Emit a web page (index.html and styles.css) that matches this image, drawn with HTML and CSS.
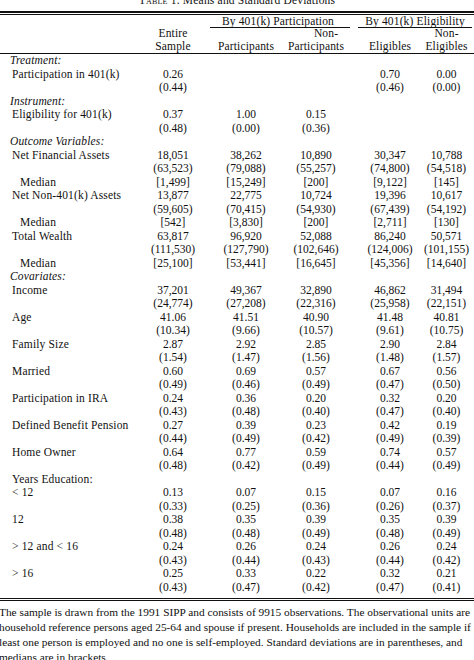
FILE: index.html
```html
<!DOCTYPE html>
<html>
<head>
<meta charset="utf-8">
<title>Table 1</title>
<link rel="stylesheet" href="styles.css">
</head>
<body>
<div class="title"><span class="sc">Table</span> 1. Means and Standard Deviations</div>
<div class="rule-double"></div>
<div class="head">
  <div class="grp grp-p"><span class="grp-text">By 401(k) Participation</span></div>
  <div class="grp grp-e"><span class="grp-text">By 401(k) Eligibility</span></div>
  <div class="hc c1 r2">Entire</div>
  <div class="hc c3 r2 non-p">Non-</div>
  <div class="hc c5 r2">Non-</div>
  <div class="hc c1 r3">Sample</div>
  <div class="hc c2 r3">Participants</div>
  <div class="hc c3 r3">Participants</div>
  <div class="hc c4 r3">Eligibles</div>
  <div class="hc c5 r3">Eligibles</div>
</div>
<div class="body">
  <div class="cat">Treatment:</div>
  <div class="lab">Participation in 401(k)</div><div class="v">0.26</div><div class="v c2"></div><div class="v c3"></div><div class="v c4">0.70</div><div class="v c5">0.00</div>
  <div class="lab"></div><div class="v">(0.44)</div><div class="v c2"></div><div class="v c3"></div><div class="v c4">(0.46)</div><div class="v c5">(0.00)</div>
  <div class="cat">Instrument:</div>
  <div class="lab">Eligibility for 401(k)</div><div class="v">0.37</div><div class="v c2">1.00</div><div class="v c3">0.15</div><div class="v c4"></div><div class="v c5"></div>
  <div class="lab"></div><div class="v">(0.48)</div><div class="v c2">(0.00)</div><div class="v c3">(0.36)</div><div class="v c4"></div><div class="v c5"></div>
  <div class="cat">Outcome Variables:</div>
  <div class="lab">Net Financial Assets</div><div class="v">18,051</div><div class="v c2">38,262</div><div class="v c3">10,890</div><div class="v c4">30,347</div><div class="v c5">10,788</div>
  <div class="lab"></div><div class="v">(63,523)</div><div class="v c2">(79,088)</div><div class="v c3">(55,257)</div><div class="v c4">(74,800)</div><div class="v c5">(54,518)</div>
  <div class="lab sub">Median</div><div class="v">[1,499]</div><div class="v c2">[15,249]</div><div class="v c3">[200]</div><div class="v c4">[9,122]</div><div class="v c5">[145]</div>
  <div class="lab">Net Non-401(k) Assets</div><div class="v">13,877</div><div class="v c2">22,775</div><div class="v c3">10,724</div><div class="v c4">19,396</div><div class="v c5">10,617</div>
  <div class="lab"></div><div class="v">(59,605)</div><div class="v c2">(70,415)</div><div class="v c3">(54,930)</div><div class="v c4">(67,439)</div><div class="v c5">(54,192)</div>
  <div class="lab sub">Median</div><div class="v">[542]</div><div class="v c2">[3,830]</div><div class="v c3">[200]</div><div class="v c4">[2,711]</div><div class="v c5">[130]</div>
  <div class="lab">Total Wealth</div><div class="v">63,817</div><div class="v c2">96,920</div><div class="v c3">52,088</div><div class="v c4">86,240</div><div class="v c5">50,571</div>
  <div class="lab"></div><div class="v">(111,530)</div><div class="v c2">(127,790)</div><div class="v c3">(102,646)</div><div class="v c4">(124,006)</div><div class="v c5">(101,155)</div>
  <div class="lab sub">Median</div><div class="v">[25,100]</div><div class="v c2">[53,441]</div><div class="v c3">[16,645]</div><div class="v c4">[45,356]</div><div class="v c5">[14,640]</div>
  <div class="cat">Covariates:</div>
  <div class="lab">Income</div><div class="v">37,201</div><div class="v c2">49,367</div><div class="v c3">32,890</div><div class="v c4">46,862</div><div class="v c5">31,494</div>
  <div class="lab"></div><div class="v">(24,774)</div><div class="v c2">(27,208)</div><div class="v c3">(22,316)</div><div class="v c4">(25,958)</div><div class="v c5">(22,151)</div>
  <div class="lab">Age</div><div class="v">41.06</div><div class="v c2">41.51</div><div class="v c3">40.90</div><div class="v c4">41.48</div><div class="v c5">40.81</div>
  <div class="lab"></div><div class="v">(10.34)</div><div class="v c2">(9.66)</div><div class="v c3">(10.57)</div><div class="v c4">(9.61)</div><div class="v c5">(10.75)</div>
  <div class="lab">Family Size</div><div class="v">2.87</div><div class="v c2">2.92</div><div class="v c3">2.85</div><div class="v c4">2.90</div><div class="v c5">2.84</div>
  <div class="lab"></div><div class="v">(1.54)</div><div class="v c2">(1.47)</div><div class="v c3">(1.56)</div><div class="v c4">(1.48)</div><div class="v c5">(1.57)</div>
  <div class="lab">Married</div><div class="v">0.60</div><div class="v c2">0.69</div><div class="v c3">0.57</div><div class="v c4">0.67</div><div class="v c5">0.56</div>
  <div class="lab"></div><div class="v">(0.49)</div><div class="v c2">(0.46)</div><div class="v c3">(0.49)</div><div class="v c4">(0.47)</div><div class="v c5">(0.50)</div>
  <div class="lab">Participation in IRA</div><div class="v">0.24</div><div class="v c2">0.36</div><div class="v c3">0.20</div><div class="v c4">0.32</div><div class="v c5">0.20</div>
  <div class="lab"></div><div class="v">(0.43)</div><div class="v c2">(0.48)</div><div class="v c3">(0.40)</div><div class="v c4">(0.47)</div><div class="v c5">(0.40)</div>
  <div class="lab">Defined Benefit Pension</div><div class="v">0.27</div><div class="v c2">0.39</div><div class="v c3">0.23</div><div class="v c4">0.42</div><div class="v c5">0.19</div>
  <div class="lab"></div><div class="v">(0.44)</div><div class="v c2">(0.49)</div><div class="v c3">(0.42)</div><div class="v c4">(0.49)</div><div class="v c5">(0.39)</div>
  <div class="lab">Home Owner</div><div class="v">0.64</div><div class="v c2">0.77</div><div class="v c3">0.59</div><div class="v c4">0.74</div><div class="v c5">0.57</div>
  <div class="lab"></div><div class="v">(0.48)</div><div class="v c2">(0.42)</div><div class="v c3">(0.49)</div><div class="v c4">(0.44)</div><div class="v c5">(0.49)</div>
  <div class="cat plain">Years Education:</div>
  <div class="lab">&lt; 12</div><div class="v">0.13</div><div class="v c2">0.07</div><div class="v c3">0.15</div><div class="v c4">0.07</div><div class="v c5">0.16</div>
  <div class="lab"></div><div class="v">(0.33)</div><div class="v c2">(0.25)</div><div class="v c3">(0.36)</div><div class="v c4">(0.26)</div><div class="v c5">(0.37)</div>
  <div class="lab">12</div><div class="v">0.38</div><div class="v c2">0.35</div><div class="v c3">0.39</div><div class="v c4">0.35</div><div class="v c5">0.39</div>
  <div class="lab"></div><div class="v">(0.48)</div><div class="v c2">(0.48)</div><div class="v c3">(0.49)</div><div class="v c4">(0.48)</div><div class="v c5">(0.49)</div>
  <div class="lab">&gt; 12 and &lt; 16</div><div class="v">0.24</div><div class="v c2">0.26</div><div class="v c3">0.24</div><div class="v c4">0.26</div><div class="v c5">0.24</div>
  <div class="lab"></div><div class="v">(0.43)</div><div class="v c2">(0.44)</div><div class="v c3">(0.43)</div><div class="v c4">(0.44)</div><div class="v c5">(0.42)</div>
  <div class="lab">&gt; 16</div><div class="v">0.25</div><div class="v c2">0.33</div><div class="v c3">0.22</div><div class="v c4">0.32</div><div class="v c5">0.21</div>
  <div class="lab"></div><div class="v">(0.43)</div><div class="v c2">(0.47)</div><div class="v c3">(0.42)</div><div class="v c4">(0.47)</div><div class="v c5">(0.41)</div>
</div>
<div class="rule-double bottom"></div>
<p class="note">The sample is drawn from the 1991 SIPP and consists of 9915 observations. The observational units are<br>household reference persons aged 25-64 and spouse if present. Households are included in the sample if at<br>least one person is employed and no one is self-employed. Standard deviations are in parentheses, and<br>medians are in brackets.</p>
</body>
</html>
```

FILE: styles.css
```css
html, body {
  margin: 0;
  padding: 0;
  background: #ffffff;
}

body {
  width: 474px;
  height: 660px;
  overflow: hidden;
  font-family: "Liberation Serif", "Times New Roman", serif;
  font-size: 11.5px;
  color: #111111;
}

.title {
  margin-top: -6px;
  height: 13px;
  line-height: 13px;
  text-align: center;
  letter-spacing: 0.2px;
  white-space: nowrap;
}

.sc {
  font-variant: small-caps;
}

.rule-double {
  margin-top: 4px;
  height: 1px;
  border-top: 2px solid #111111;
  border-bottom: 1px solid #111111;
}

.rule-double.bottom {
  margin-top: 4px;
  border-top: 1px solid #111111;
  border-bottom: 1px solid #111111;
}

.head,
.body {
  display: grid;
  grid-template-columns: 142px 62px 78px 68px 72px 52px;
}

.head {
  grid-template-rows: 13px 11px 14px;
  border-bottom: 1px solid #111111;
  letter-spacing: 0.15px;
  white-space: nowrap;
}

.grp {
  grid-row: 1;
  text-align: center;
  line-height: 12px;
  border-bottom: 1px solid #111111;
}

.grp-p {
  grid-column: 3 / span 2;
  margin-left: 6px;
  padding-right: 4px;
}

.grp-e {
  grid-column: 5 / span 2;
  margin-left: 8px;
  margin-right: 2px;
}

.hc {
  text-align: center;
}

.r2 {
  grid-row: 2;
  line-height: 11px;
}

.r3 {
  grid-row: 3;
  line-height: 14px;
}

.c1 { grid-column: 2; }
.head .c2 { grid-column: 3; }
.head .c3 { grid-column: 4; }
.head .c4 { grid-column: 5; }
.head .c5 { grid-column: 6; }

.c2 { padding-left: 6px; }
.c4 { padding-left: 8px; }
.c5 { padding-right: 3px; }

.non-p {
  padding-left: 20px;
}

.body {
  grid-auto-rows: 13.5px;
  line-height: 13.5px;
  white-space: nowrap;
}

.cat {
  grid-column: 1 / -1;
  padding-left: 10px;
  font-style: italic;
  letter-spacing: 0.15px;
}

.cat.plain {
  font-style: normal;
  padding-left: 12px;
}

.lab {
  padding-left: 12px;
  letter-spacing: 0.15px;
}

.lab.sub {
  padding-left: 20px;
}

.v {
  text-align: center;
}

.note {
  margin: 3.5px 0 0 -1px;
  font-size: 11.35px;
  line-height: 15px;
  white-space: nowrap;
}
```
